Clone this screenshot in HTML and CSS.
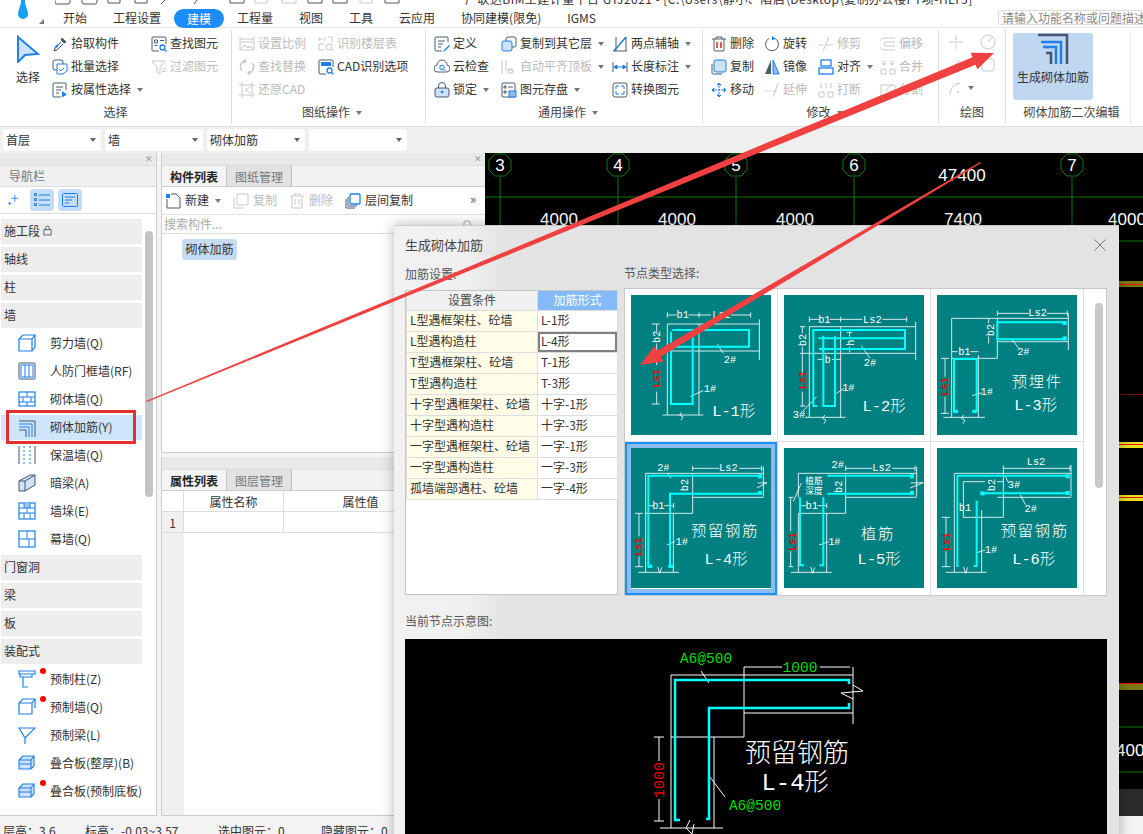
FILE: index.html
```html
<!DOCTYPE html>
<html lang="zh-CN">
<head>
<meta charset="utf-8">
<title>生成砌体加筋</title>
<link rel="stylesheet" href="styles.css">
</head>
<body>
<svg class="defs" xmlns="http://www.w3.org/2000/svg">
  <symbol id="i-pointer" viewBox="0 0 24 28"><path d="M2 2 L22 19 L9 20 L2 27Z" fill="#cfe2fb" stroke="#1e7fe8" stroke-width="2"/></symbol>
  <symbol id="i-pick" viewBox="0 0 16 16"><path d="M10 2 l4 4 -2 1 -3-3z" fill="#4a5a6e" stroke="#4a5a6e"/><path d="M9 6 L3 12 L2 15 L5 14 L11 8" fill="none" stroke="#4a5a6e"/><path d="M3 12 l3-3" stroke="#1e7fe8" stroke-width="2"/></symbol>
  <symbol id="i-batch" viewBox="0 0 16 16"><rect x="1" y="1" width="10" height="10" rx="2" fill="none" stroke="#4a5a6e"/><path d="M5 5 h10 v7 l-4 3 h-6z" fill="#fff" stroke="#1e7fe8"/><path d="M7 10 l2 2 3-3" fill="none" stroke="#1e7fe8"/></symbol>
  <symbol id="i-attr" viewBox="0 0 16 16"><path d="M9 15 H2 a1 1 0 0 1-1-1 V2 a1 1 0 0 1 1-1 h11 a1 1 0 0 1 1 1 v6" fill="none" stroke="#4a5a6e"/><path d="M4 5 h7 M4 8 h5 M4 11 h3" stroke="#4a5a6e"/><path d="M10 9 l5 3.500 -5 3z" fill="#1e7fe8"/></symbol>
  <symbol id="i-find" viewBox="0 0 16 16"><path d="M8 15 H2 a1 1 0 0 1-1-1 V2 a1 1 0 0 1 1-1 h12 a1 1 0 0 1 1 1 v6" fill="none" stroke="#4a5a6e"/><path d="M3.500 4 h3 v3 h-3z M9 4.500 h4 M3.500 9.500 h3" fill="none" stroke="#4a5a6e"/><circle cx="11.500" cy="11.500" r="2.500" fill="none" stroke="#1e7fe8" stroke-width="1.300"/><path d="M13.500 13.500 L15.500 15.500" stroke="#1e7fe8" stroke-width="1.300"/></symbol>
  <symbol id="i-filter" viewBox="0 0 16 16"><path d="M1 2 H14 L9 8 V15 L6 13 V8Z M11 10 h4 M11 12.500 h4" fill="none" stroke="#c8c8c8"/></symbol>
  <symbol id="i-scale" viewBox="0 0 16 16"><path d="M1 1 v4 M15 1 v4 M1 3 h14 M1 6 h14 v8 H1z M2 13 l4-4 3 3 2-2 3 3" fill="none" stroke="#c8c8c8"/></symbol>
  <symbol id="i-floor" viewBox="0 0 16 16"><path d="M1 1 v4 M1 3 h4 M1 8 h5 M1 8 v6 h5 M7 1 v4 M10 1 h4 v5" fill="none" stroke="#c8c8c8"/><circle cx="11" cy="11" r="3" fill="none" stroke="#c8c8c8"/><path d="M13 13 l2 2" stroke="#c8c8c8"/></symbol>
  <symbol id="i-replace" viewBox="0 0 16 16"><path d="M3 12 A6 6 0 0 1 6 2 M13 4 A6 6 0 0 1 10 14 M5 0 l2 2 -2 2 M11 12 l-2 2 2 2" fill="none" stroke="#c8c8c8" stroke-width="1.300"/></symbol>
  <symbol id="i-cadopt" viewBox="0 0 16 16"><path d="M8 15 H2 a1 1 0 0 1-1-1 V2 a1 1 0 0 1 1-1 h12 a1 1 0 0 1 1 1 v6" fill="none" stroke="#4a5a6e"/><rect x="3" y="3" width="10" height="4" fill="#1e7fe8"/><circle cx="11.500" cy="11.500" r="2.500" fill="none" stroke="#1e7fe8" stroke-width="1.300"/><path d="M13.500 13.500 L15.500 15.500" stroke="#1e7fe8" stroke-width="1.300"/></symbol>
  <symbol id="i-restore" viewBox="0 0 16 16"><path d="M3 0 v16 M13 0 v16 M0 3 h16 M0 13 h16 M11 5 l-5 3 5 3" fill="none" stroke="#c8c8c8"/></symbol>
  <symbol id="i-define" viewBox="0 0 16 16"><path d="M14 6 V2 a1 1 0 0 0-1-1 H2 a1 1 0 0 0-1 1 v12 a1 1 0 0 0 1 1 h6 M4 5 h7 M4 8 h5 M4 11 h3" fill="none" stroke="#4a5a6e"/><path d="M10 14 l5-5 1 1-5 5-2 1z" fill="#1e7fe8"/></symbol>
  <symbol id="i-cloud" viewBox="0 0 16 16"><path d="M4 13 A3.500 3.500 0 0 1 3 6 A5 5 0 0 1 13 6 A3.500 3.500 0 0 1 12 13z" fill="none" stroke="#4a5a6e"/><circle cx="8" cy="8.500" r="2.300" fill="#dbe9fb" stroke="#1e7fe8"/><path d="M10 10.500 l1.500 1.500" stroke="#1e7fe8"/></symbol>
  <symbol id="i-lock" viewBox="0 0 16 16"><rect x="1" y="6" width="14" height="9" rx="2" fill="#cfe2fb" stroke="#4a5a6e"/><path d="M4.500 6 V4 a3.500 3.500 0 0 1 7 0 V6" fill="none" stroke="#4a5a6e"/><circle cx="8" cy="10" r="1.300" fill="#1e7fe8"/></symbol>
  <symbol id="i-copyfloor" viewBox="0 0 16 16"><rect x="5" y="1" width="10" height="10" rx="2" fill="#fff" stroke="#4a5a6e"/><rect x="1" y="5" width="10" height="10" rx="2" fill="#cfe2fb" stroke="#1e7fe8"/></symbol>
  <symbol id="i-align" viewBox="0 0 16 16"><path d="M1 1 v14 M5 1 v10 h8" fill="none" stroke="#c8c8c8"/><path d="M8 10 h3 l1 4 h-5z" fill="none" stroke="#c8c8c8"/></symbol>
  <symbol id="i-save" viewBox="0 0 16 16"><rect x="1" y="1" width="13" height="14" rx="1" fill="none" stroke="#4a5a6e"/><path d="M3 4 h2 v2 h-2z M7 5 h5 M3 9 h2 v2 h-2z" fill="none" stroke="#4a5a6e"/><rect x="8" y="9" width="7" height="6" fill="#8fbef5" stroke="#1e7fe8"/></symbol>
  <symbol id="i-axis" viewBox="0 0 16 16"><path d="M2 15 L14 1 M4 1 v14 M1 15 h14 M14 1 v14" fill="none" stroke="#4a5a6e"/><path d="M2 15 L14 1" stroke="#1e7fe8" stroke-width="1.500"/></symbol>
  <symbol id="i-len" viewBox="0 0 16 16"><path d="M1 3 v10 M15 3 v10" stroke="#4a5a6e"/><path d="M2 8 h12 M2 8 l3-2 v4z M14 8 l-3-2 v4z" fill="#1e7fe8" stroke="#1e7fe8"/></symbol>
  <symbol id="i-convert" viewBox="0 0 16 16"><rect x="1" y="1" width="14" height="14" rx="2" fill="none" stroke="#4a5a6e"/><path d="M4 7 V4 h3 M9 4 h3 v3 M12 9 v3 H9 M7 12 H4 V9" fill="none" stroke="#1e7fe8"/></symbol>
  <symbol id="i-del" viewBox="0 0 16 16"><path d="M1 3 h14 M5 3 V1 h6 v2 M3 3 v11 a1 1 0 0 0 1 1 h8 a1 1 0 0 0 1-1 V3" fill="none" stroke="#4a5a6e"/><path d="M6 6 v6 M10 6 v6" stroke="#e02020" stroke-width="1.500"/></symbol>
  <symbol id="i-rotate" viewBox="0 0 16 16"><path d="M11 2.500 A6.500 6.500 0 1 1 5 2.500" fill="none" stroke="#4a5a6e"/><path d="M8 0 l3.500 2.500 -3.500 2z" fill="#1e7fe8"/></symbol>
  <symbol id="i-trim" viewBox="0 0 16 16"><path d="M1 9 h4 M7 9 h8 M11 1 L5 15" fill="none" stroke="#c8c8c8"/></symbol>
  <symbol id="i-offset" viewBox="0 0 16 16"><path d="M15 2 H5 a4 4 0 0 0 0 12 h10 M15 6 H6 a2 2 0 0 0 0 4 h9" fill="none" stroke="#c8c8c8"/></symbol>
  <symbol id="i-copy" viewBox="0 0 16 16"><path d="M1 5 v9 a1 1 0 0 0 1 1 h9" fill="none" stroke="#4a5a6e"/><rect x="3" y="1" width="12" height="12" rx="2" fill="#cfe2fb" stroke="#1e7fe8"/></symbol>
  <symbol id="i-mirror" viewBox="0 0 16 16"><path d="M7 1 L1 15 H7z" fill="#4a5a6e"/><path d="M9 1 L15 15 H9z" fill="#8fbef5" stroke="#1e7fe8"/></symbol>
  <symbol id="i-alignto" viewBox="0 0 16 16"><rect x="3" y="1" width="10" height="6" fill="none" stroke="#1e7fe8" stroke-width="1.300"/><rect x="1" y="9" width="14" height="6" fill="none" stroke="#1e7fe8" stroke-width="1.300"/></symbol>
  <symbol id="i-merge" viewBox="0 0 16 16"><path d="M1 10 h5 v5 H1z M10 10 h5 v5 h-5z M4 1 v5 M12 1 v5 M2 4 l2 2 2-2 M10 4 l2 2 2-2" fill="none" stroke="#c8c8c8"/></symbol>
  <symbol id="i-move" viewBox="0 0 16 16"><path d="M8 1 v14 M1 8 h14 M8 1 l-2 2 h4z M8 15 l-2-2 h4z M1 8 l2-2 v4z M15 8 l-2-2 v4z" fill="#1e7fe8" stroke="#1e7fe8" stroke-dasharray="2 1"/></symbol>
  <symbol id="i-extend" viewBox="0 0 16 16"><path d="M1 9 h2 M5 9 h2 M9 9 h4 M14 1 L9 15" fill="none" stroke="#c8c8c8"/></symbol>
  <symbol id="i-break" viewBox="0 0 16 16"><path d="M1 10 h5 v5 H1z M10 10 h5 v5 h-5z M3 1 v5 M8 1 v5 M13 1 v5" fill="none" stroke="#c8c8c8"/></symbol>
  <symbol id="i-cut" viewBox="0 0 16 16"><path d="M14 3 H1 v12 h14 V3 M5 9 l8-7" fill="none" stroke="#c8c8c8"/></symbol>
  <symbol id="i-cross" viewBox="0 0 16 16"><path d="M8 1 v5 M8 10 v5 M1 8 h5 M10 8 h5" stroke="#c8c8c8"/><circle cx="8" cy="8" r="1" fill="#c8c8c8"/></symbol>
  <symbol id="i-gauge" viewBox="0 0 16 16"><circle cx="8" cy="8" r="7" fill="none" stroke="#c8c8c8"/><path d="M8 8 l4-4" stroke="#c8c8c8"/></symbol>
  <symbol id="i-pen" viewBox="0 0 16 16"><path d="M2 14 L12 3" stroke="#c8c8c8"/><circle cx="3" cy="13" r="1" fill="#c8c8c8"/></symbol>
  <symbol id="i-square" viewBox="0 0 16 16"><rect x="2" y="2" width="12" height="12" rx="2" fill="none" stroke="#c8c8c8"/></symbol>
  <symbol id="i-arc" viewBox="0 0 16 16"><path d="M2 15 A11 11 0 0 1 12 3" fill="none" stroke="#c8c8c8"/><circle cx="10" cy="12" r="1" fill="#c8c8c8"/></symbol>
  <symbol id="i-rebar" viewBox="0 0 32 32"><path d="M1 2 H30 V31" fill="none" stroke="#45566e" stroke-width="2.500"/><path d="M4 9 H24 V31" fill="none" stroke="#1e7fe8" stroke-width="2.500"/><path d="M6 14 H19 V31" fill="none" stroke="#1e7fe8" stroke-width="2.500"/><path d="M9 20 H14 V31" fill="none" stroke="#45566e" stroke-width="2.500"/></symbol>

  <symbol id="n-spark" viewBox="0 0 14 14"><path d="M8 1 v8 M4 5 h8 M2 9 v4 M0 11 h4" stroke="#1e7fe8"/></symbol>
  <symbol id="n-list" viewBox="0 0 16 14"><path d="M5 2 h11 M5 7 h11 M5 12 h11" stroke="#1e7fe8"/><path d="M0.500 0.500 h2 v2 h-2z M0.500 5.500 h2 v2 h-2z M0.500 10.500 h2 v2 h-2z" fill="none" stroke="#1e7fe8"/></symbol>
  <symbol id="n-card" viewBox="0 0 16 14"><rect x="0.500" y="0.500" width="15" height="13" rx="1" fill="none" stroke="#1e7fe8"/><path d="M3 4 h10 M3 7 h7 M3 10 h4" stroke="#1e7fe8"/></symbol>
  <symbol id="n-shear" viewBox="0 0 18 18"><path d="M1 5 h13 v12 H1z" fill="none" stroke="#1e7fe8" stroke-width="1.200"/><path d="M1 5 L5 1 H17 V13 L14 17 M14 5 L17 1" fill="none" stroke="#1e7fe8" stroke-width="1.200"/></symbol>
  <symbol id="n-door" viewBox="0 0 18 18"><rect x="1" y="1" width="16" height="16" rx="1" fill="none" stroke="#45566e"/><rect x="3" y="3" width="12" height="12" fill="none" stroke="#1e7fe8"/><path d="M7 3 v12 M11 3 v12" stroke="#1e7fe8"/></symbol>
  <symbol id="n-brick" viewBox="0 0 18 18"><rect x="1" y="2" width="16" height="14" fill="none" stroke="#1e7fe8" stroke-width="1.200"/><path d="M1 7 h16 M1 12 h16 M9 2 v5 M5 7 v5 M13 7 v5 M9 12 v4" stroke="#1e7fe8"/></symbol>
  <symbol id="n-rebar" viewBox="0 0 18 18"><path d="M1 2 H17 V18" fill="none" stroke="#45566e"/><path d="M1 5 H14 V18 M1 8 H11 V18" fill="none" stroke="#1e7fe8"/><path d="M1 11 H8 V18" fill="none" stroke="#45566e"/></symbol>
  <symbol id="n-insul" viewBox="0 0 18 18"><path d="M1 0 v18 M17 0 v18" stroke="#45566e"/><path d="M6 0 v18 M12 0 v18" stroke="#1e7fe8" stroke-dasharray="2 2"/></symbol>
  <symbol id="n-beam" viewBox="0 0 18 18"><path d="M1 7 L12 1 H17 V11 L7 17 H1z M1 7 H7 V17 M7 7 L17 1" fill="#cfe2fb" stroke="#45566e"/></symbol>
  <symbol id="n-pier" viewBox="0 0 18 18"><rect x="1" y="1" width="16" height="16" fill="none" stroke="#1e7fe8" stroke-width="1.200"/><path d="M6 1 h6 v5 H6z" fill="#9cc6f7"/><path d="M1 6 h16 M1 11 h16 M6 1 v5 M12 1 v5 M9 6 v5 M6 11 v6 M12 11 v6" stroke="#1e7fe8"/></symbol>
  <symbol id="n-curtain" viewBox="0 0 18 18"><rect x="1" y="1" width="16" height="16" fill="none" stroke="#1e7fe8" stroke-width="1.200"/><path d="M1 9 h16 M9 1 v8 M11 9 v8" stroke="#1e7fe8"/></symbol>
  <symbol id="n-pcol" viewBox="0 0 18 18"><path d="M1 1 h16 v3 H1z M2 4 v3 h12 V4 M5 7 v10 h5" fill="none" stroke="#1e7fe8" stroke-width="1.200"/></symbol>
  <symbol id="n-pwall" viewBox="0 0 18 18"><path d="M1 5 h13 v11 H1z M1 5 L5 1 H17 V10 M14 5 L17 1" fill="none" stroke="#1e7fe8" stroke-width="1.200"/></symbol>
  <symbol id="n-pbeam" viewBox="0 0 18 18"><path d="M1 2 H17 L7 12 Z M7 12 V18" fill="none" stroke="#1e7fe8" stroke-width="1.200"/></symbol>
  <symbol id="n-slab" viewBox="0 0 18 18"><path d="M1 6 L5 2 H16 V12 L13 15 H1z M1 6 H13 V15 M13 6 L16 2 M1 10 H13" fill="#cfe2fb" stroke="#1e7fe8" stroke-width="1.100"/></symbol>
  <symbol id="t-new" viewBox="0 0 16 16"><path d="M2 6 V15 H15 V5 L11 1 H6" fill="none" stroke="#45566e"/><rect x="1" y="1" width="4" height="4" fill="#1e7fe8"/></symbol>
  <symbol id="t-copy" viewBox="0 0 16 16"><path d="M1 5 v10 h10" fill="none" stroke="#c8c8c8"/><rect x="4" y="1" width="11" height="11" rx="1" fill="none" stroke="#c8c8c8"/></symbol>
  <symbol id="t-del" viewBox="0 0 16 16"><path d="M1 3 h14 M5 3 V1 h6 v2 M3 3 v12 h10 V3 M6 6 v6 M10 6 v6" fill="none" stroke="#c8c8c8"/></symbol>
  <symbol id="t-floor" viewBox="0 0 16 16"><path d="M1 6 v9 h9 M3 4 v9 h9" fill="none" stroke="#45566e"/><rect x="5" y="1" width="10" height="10" rx="1" fill="#fff" stroke="#1e7fe8" stroke-width="1.300"/></symbol>
  <symbol id="t-search" viewBox="0 0 14 14"><circle cx="6" cy="6" r="4" fill="none" stroke="#999"/><path d="M9 9 l4 4" stroke="#999"/></symbol>
</svg>

<div class="app">
  <header class="top">
    <svg class="qa" viewBox="0 0 346 8" width="346" height="8"><path d="M0 0 v2 a2 2 0 0 0 2 2 h11 a2 2 0 0 0 2-2 V0 M27 0 v2 a2 2 0 0 0 2 2 h11 a2 2 0 0 0 2-2 V0 M53 0 v3 h12 V0 M80 0 v3 h12 V0 M110 0 l-4 4 M142 0 l-3 4 M175 0 v3 h14 V0" fill="none" stroke="#555"/><path d="M200 0 v3 h12 V0 M227 0 v3 h14 V0 M305 0 v3 h12 V0" fill="none" stroke="#c8c8c8"/><path d="M253 0 v3 h14 V0 M278 0 v3 h14 V0 M330 0 v3 h14 V0" fill="none" stroke="#555"/></svg>
    <span class="title">广联达BIM土建计量平台 GTJ2021 - [C:\Users\静小、陷启\Desktop\复制办公楼PT项-HLT5]</span>
  </header>
  <svg class="logo" viewBox="0 0 10 20" width="10" height="20"><path d="M3 0 H7 C7 6 10 10 10 14 A5 5 0 0 1 0 14 C0 10 3 6 3 0Z" fill="#17a0f2"/></svg>
  <nav class="tabs">
    <span class="tab-mark"></span>
    <span>开始</span><span>工程设置</span><span class="tab-on">建模</span><span>工程量</span><span>视图</span><span>工具</span><span>云应用</span><span>协同建模(限免)</span><span>IGMS</span>
    <span class="help">请输入功能名称或问题描述</span>
  </nav>

  <section class="ribbon">
    <div class="group g-select">
      <div class="g-body">
        <div class="bigbtn"><svg class="ic-pointer"><use href="#i-pointer"/></svg><span>选择</span></div>
        <div class="col c1a">
          <div class="rit"><svg class="ic"><use href="#i-pick"/></svg>拾取构件</div>
          <div class="rit"><svg class="ic"><use href="#i-batch"/></svg>批量选择</div>
          <div class="rit"><svg class="ic"><use href="#i-attr"/></svg>按属性选择<i class="car"></i></div>
        </div>
        <div class="col">
          <div class="rit"><svg class="ic"><use href="#i-find"/></svg>查找图元</div>
          <div class="rit off"><svg class="ic"><use href="#i-filter"/></svg>过滤图元</div>
        </div>
      </div>
      <div class="g-label">选择</div>
    </div>
    <div class="group g-draw">
      <div class="g-body">
        <div class="col c2a">
          <div class="rit off"><svg class="ic"><use href="#i-scale"/></svg>设置比例</div>
          <div class="rit off"><svg class="ic"><use href="#i-replace"/></svg>查找替换</div>
          <div class="rit off"><svg class="ic"><use href="#i-restore"/></svg>还原CAD</div>
        </div>
        <div class="col">
          <div class="rit off"><svg class="ic"><use href="#i-floor"/></svg>识别楼层表</div>
          <div class="rit"><svg class="ic"><use href="#i-cadopt"/></svg>CAD识别选项</div>
        </div>
      </div>
      <div class="g-label">图纸操作<i class="car"></i></div>
    </div>
    <div class="group g-common">
      <div class="g-body">
        <div class="col c3a">
          <div class="rit"><svg class="ic"><use href="#i-define"/></svg>定义</div>
          <div class="rit"><svg class="ic"><use href="#i-cloud"/></svg>云检查</div>
          <div class="rit"><svg class="ic"><use href="#i-lock"/></svg>锁定<i class="car"></i></div>
        </div>
        <div class="col c3b">
          <div class="rit"><svg class="ic"><use href="#i-copyfloor"/></svg>复制到其它层<i class="car"></i></div>
          <div class="rit off"><svg class="ic"><use href="#i-align"/></svg>自动平齐顶板<i class="car"></i></div>
          <div class="rit"><svg class="ic"><use href="#i-save"/></svg>图元存盘<i class="car"></i></div>
        </div>
        <div class="col">
          <div class="rit"><svg class="ic"><use href="#i-axis"/></svg>两点辅轴<i class="car"></i></div>
          <div class="rit"><svg class="ic"><use href="#i-len"/></svg>长度标注<i class="car"></i></div>
          <div class="rit"><svg class="ic"><use href="#i-convert"/></svg>转换图元</div>
        </div>
      </div>
      <div class="g-label">通用操作<i class="car"></i></div>
    </div>
    <div class="group g-modify">
      <div class="g-body">
        <div class="col c4a">
          <div class="rit"><svg class="ic"><use href="#i-del"/></svg>删除</div>
          <div class="rit"><svg class="ic"><use href="#i-copy"/></svg>复制</div>
          <div class="rit"><svg class="ic"><use href="#i-move"/></svg>移动</div>
        </div>
        <div class="col c4b">
          <div class="rit"><svg class="ic"><use href="#i-rotate"/></svg>旋转</div>
          <div class="rit"><svg class="ic"><use href="#i-mirror"/></svg>镜像</div>
          <div class="rit off"><svg class="ic"><use href="#i-extend"/></svg>延伸</div>
        </div>
        <div class="col c4c">
          <div class="rit off"><svg class="ic"><use href="#i-trim"/></svg>修剪</div>
          <div class="rit"><svg class="ic"><use href="#i-alignto"/></svg>对齐<i class="car"></i></div>
          <div class="rit off"><svg class="ic"><use href="#i-break"/></svg>打断</div>
        </div>
        <div class="col">
          <div class="rit off"><svg class="ic"><use href="#i-offset"/></svg>偏移</div>
          <div class="rit off"><svg class="ic"><use href="#i-merge"/></svg>合并</div>
          <div class="rit off"><svg class="ic"><use href="#i-cut"/></svg>分割</div>
        </div>
      </div>
      <div class="g-label">修改<i class="car"></i></div>
    </div>
    <div class="group g-sketch">
      <div class="g-body sk">
        <svg class="ic"><use href="#i-cross"/></svg><svg class="ic"><use href="#i-gauge"/></svg>
        <svg class="ic"><use href="#i-pen"/></svg><svg class="ic"><use href="#i-square"/></svg>
        <svg class="ic"><use href="#i-arc"/></svg><i class="car"></i>
      </div>
      <div class="g-label">绘图</div>
    </div>
    <div class="group g-edit">
      <div class="g-body">
        <div class="genbtn"><svg class="ic-rebar"><use href="#i-rebar"/></svg><span>生成砌体加筋</span></div>
      </div>
      <div class="g-label">砌体加筋二次编辑</div>
    </div>
  </section>

  <div class="selbar">
    <div class="sel">首层</div>
    <div class="sel">墙</div>
    <div class="sel">砌体加筋</div>
    <div class="sel"></div>
  </div>

  <main class="main">
    <aside class="nav">
      <div class="grip"><span class="x">✕</span></div>
      <div class="nav-h">导航栏</div>
      <div class="nav-tools">
        <svg class="nt-spark"><use href="#n-spark"/></svg>
        <span class="nt-on"><svg class="nt"><use href="#n-list"/></svg></span>
        <span class="nt-on"><svg class="nt"><use href="#n-card"/></svg></span>
      </div>
      <div class="nav-list">
        <div class="sec">施工段 <svg class="lock" viewBox="0 0 10 12"><path d="M1 5 h8 v6 H1z M3 5 V3 a2 2 0 0 1 4 0 V5" fill="none" stroke="#555"/></svg></div>
        <div class="sec">轴线</div>
        <div class="sec">柱</div>
        <div class="sec">墙</div>
        <div class="items">
          <div class="item"><svg class="ni"><use href="#n-shear"/></svg>剪力墙(Q)</div>
          <div class="item"><svg class="ni"><use href="#n-door"/></svg>人防门框墙(RF)</div>
          <div class="item"><svg class="ni"><use href="#n-brick"/></svg>砌体墙(Q)</div>
          <div class="item item-sel"><svg class="ni"><use href="#n-rebar"/></svg>砌体加筋(Y)<span class="redbox"></span></div>
          <div class="item"><svg class="ni"><use href="#n-insul"/></svg>保温墙(Q)</div>
          <div class="item"><svg class="ni"><use href="#n-beam"/></svg>暗梁(A)</div>
          <div class="item"><svg class="ni"><use href="#n-pier"/></svg>墙垛(E)</div>
          <div class="item"><svg class="ni"><use href="#n-curtain"/></svg>幕墙(Q)</div>
        </div>
        <div class="sec">门窗洞</div>
        <div class="sec">梁</div>
        <div class="sec">板</div>
        <div class="sec">装配式</div>
        <div class="items">
          <div class="item"><svg class="ni"><use href="#n-pcol"/></svg>预制柱(Z)<span class="dot"></span></div>
          <div class="item"><svg class="ni"><use href="#n-pwall"/></svg>预制墙(Q)<span class="dot"></span></div>
          <div class="item"><svg class="ni"><use href="#n-pbeam"/></svg>预制梁(L)</div>
          <div class="item"><svg class="ni"><use href="#n-slab"/></svg>叠合板(整厚)(B)</div>
          <div class="item"><svg class="ni"><use href="#n-slab"/></svg>叠合板(预制底板)<span class="dot"></span></div>
        </div>
      </div>
      <div class="nav-scroll"></div>
    </aside>

    <div class="mid">
      <section class="panel p-top">
        <div class="grip"><span class="x">✕</span></div>
        <div class="ptabs"><span class="ptab on">构件列表</span><span class="ptab">图纸管理</span></div>
        <div class="ptools">
          <span class="pt"><svg class="ic"><use href="#t-new"/></svg>新建<i class="car"></i></span>
          <span class="pt off"><svg class="ic"><use href="#t-copy"/></svg>复制</span>
          <span class="pt off"><svg class="ic"><use href="#t-del"/></svg>删除</span>
          <span class="pt"><svg class="ic"><use href="#t-floor"/></svg>层间复制</span>
          <span class="more">»</span>
        </div>
        <div class="psearch"><span>搜索构件...</span><svg class="ps-i"><use href="#t-search"/></svg></div>
        <div class="pbody"><span class="chip">砌体加筋</span></div>
      </section>
      <section class="panel p-bot">
        <div class="grip"></div>
        <div class="ptabs"><span class="ptab on">属性列表</span><span class="ptab">图层管理</span></div>
        <div class="attr-head"><span class="ah0"></span><span class="ah1">属性名称</span><span class="ah2">属性值</span></div>
        <div class="attr-row"><span class="ah0">1</span><span class="ah1"></span><span class="ah2"></span></div>
        <div class="attr-rest"></div>
      </section>
    </div>

    <div class="cad">
      <svg class="cad-svg" viewBox="485 153 658 663">
        <g class="g-line">
          <path d="M485 197 H1143 M500 177 V225 M618 177 V225 M736 177 V225 M854 177 V225 M1072 177 V225 M1119 241 H1143 M1119 727 H1143 M1119 772 H1143"/>
          <polygon points="511,170 505,176 495,176 489,170 489,160 495,154 505,154 511,160"/>
          <polygon points="629,170 623,176 613,176 607,170 607,160 613,154 623,154 629,160"/>
          <polygon points="747,170 741,176 731,176 725,170 725,160 731,154 741,154 747,160"/>
          <polygon points="865,170 859,176 849,176 843,170 843,160 849,154 859,154 865,160"/>
          <polygon points="1083,170 1077,176 1067,176 1061,170 1061,160 1067,154 1077,154 1083,160"/>
        </g>
        <g class="cad-t">
          <text x="500" y="171" class="ax">3</text><text x="618" y="171" class="ax">4</text><text x="736" y="171" class="ax">5</text><text x="854" y="171" class="ax">6</text><text x="1072" y="171" class="ax">7</text>
          <text x="962" y="181">47400</text>
          <text x="559" y="225">4000</text><text x="677" y="225">4000</text><text x="795" y="225">4000</text><text x="963" y="225">7400</text><text x="1127" y="225">4000</text>
          <text x="1135" y="756">4000</text>
        </g>
        <rect class="s-olive" x="1119" y="281" width="24" height="6"/><rect class="s-red" x="1119" y="284" width="24" height="1"/>
        <rect class="s-dred" x="1119" y="394" width="24" height="1"/>
        <rect class="s-yel" x="1119" y="442" width="24" height="6"/><rect class="s-red" x="1119" y="444" width="24" height="1"/>
        <rect class="s-yel" x="1119" y="495" width="24" height="6"/><rect class="s-red" x="1119" y="497" width="24" height="1"/>
        <rect class="s-olive" x="1119" y="683" width="24" height="7"/><rect class="s-red" x="1119" y="683" width="24" height="1"/>
        <rect class="s-grey" x="1119" y="789" width="24" height="27"/>
      </svg>
    </div>
  </main>

  <footer class="status">
    <span class="s1">层高：3.6</span><span class="s2">标高：-0.03~3.57</span><span class="s3">选中图元：0</span><span class="s4">隐藏图元：0</span>
  </footer>

  <div class="dialog">
    <div class="d-title"><span>生成砌体加筋</span><svg class="d-x" viewBox="0 0 12 12"><path d="M0.500 0.500 L11.500 11.500 M11.500 0.500 L0.500 11.500"/></svg></div>
    <div class="d-row">
      <div class="d-left">
        <div class="d-lab lab-l">加筋设置:</div>
        <div class="tbl-wrap">
          <table class="tbl">
            <tr><th>设置条件</th><th class="th2">加筋形式</th></tr>
            <tr><td>L型遇框架柱、砼墙</td><td>L-1形</td></tr>
            <tr><td>L型遇构造柱</td><td class="cur">L-4形</td></tr>
            <tr><td>T型遇框架柱、砼墙</td><td>T-1形</td></tr>
            <tr><td>T型遇构造柱</td><td>T-3形</td></tr>
            <tr><td>十字型遇框架柱、砼墙</td><td>十字-1形</td></tr>
            <tr><td>十字型遇构造柱</td><td>十字-3形</td></tr>
            <tr><td>一字型遇框架柱、砼墙</td><td>一字-1形</td></tr>
            <tr><td>一字型遇构造柱</td><td>一字-3形</td></tr>
            <tr><td>孤墙端部遇柱、砼墙</td><td>一字-4形</td></tr>
          </table>
        </div>
      </div>
      <div class="d-right">
        <div class="d-lab lab-r">节点类型选择:</div>
        <div class="nodes">
          <div class="node-grid">
            <div class="cell"><svg class="tile" viewBox="0 0 420 420">
              <path class="w" d="M109 52 V68 M109 60 H137 M172 60 H240 M300 60 H359 M359 52 V68 M204 52 V68 M109 87 H385 M109 87 V360 M204 87 V360 M60 168 H385 M95 360 H217 M385 73 V195 M62 87 H87 M62 327 H87 M77 87 V110 M77 145 V210 M77 290 V327 M259 148 L277 175 M177 305 L217 287 M152 352 L146 360 L156 366 L150 376"/>
              <path class="c" d="M124 105 H354 V155 H124 M120 110 V327 H185 V110"/>
              <text class="t" x="155" y="70">b1</text><text class="t" x="272" y="70">Ls2</text><text class="t" x="297" y="205">2#</text><text class="t" x="237" y="290">1#</text>
              <text class="t" transform="rotate(-90 77 125)" x="77" y="135">b2</text><text class="tr" transform="rotate(-90 77 250)" x="77" y="260">Ls1</text>
              <text class="big" x="308" y="362">L-1形</text>
            </svg></div>
            <div class="cell"><svg class="tile" viewBox="0 0 420 420">
              <path class="w" d="M76 65 V81 M76 73 H105 M137 73 H170 M170 65 V81 M170 73 H235 M295 73 H368 M368 65 V81 M76 95 H395 M395 80 V195 M48 175 H395 M76 95 V367 M170 95 V367 M63 367 H185 M48 95 H65 M55 95 V115 M55 155 V240 M55 290 V333 M48 333 H65 M100 193 H118 M144 193 H170 M188 112 H205 M197 112 V125 M197 155 V172 M232 152 L258 190 M155 297 L180 280 M98 305 L55 350 M122 360 L116 370 L126 376 L120 386"/>
              <path class="c" d="M100 333 H88 V105 H363 V130 H103 M363 130 V162 H105 M118 122 V333 H153 V122"/>
              <text class="t" x="121" y="83">b1</text><text class="t" x="265" y="83">Ls2</text><text class="t" x="131" y="203">b</text><text class="t" x="258" y="213">2#</text><text class="t" x="193" y="287">1#</text><text class="t" x="45" y="370">3#</text>
              <text class="t" transform="rotate(-90 55 135)" x="55" y="145">b2</text><text class="t" transform="rotate(-90 201 143)" x="201" y="153">h</text><text class="tr" transform="rotate(-90 55 255)" x="55" y="265">Ls1</text>
              <text class="big" x="300" y="348">L-2形</text>
            </svg></div>
            <div class="cell"><svg class="tile" viewBox="0 0 420 420">
              <path class="w" d="M181 47 V63 M181 55 H275 M330 55 H391 M391 47 V63 M44 70 H394 M181 70 V190 M44 190 H181 M44 70 V367 M124 180 V367 M19 367 H144 M394 55 V165 M181 140 H394 M44 170 H62 M100 170 H124 M12 190 H36 M24 190 V245 M24 305 V355 M12 355 H36 M155 70 V85 M155 125 V146 M225 133 L245 160 M105 302 L135 293 M80 360 L74 370 L84 376 L78 386"/>
              <path class="c" d="M389 82 H181 V133 H389 M51 350 V192 H119 V350"/>
              <rect class="cf" x="49" y="344" width="14" height="10"/><rect class="cf" x="106" y="344" width="14" height="10"/><rect class="cf" x="377" y="78" width="12" height="12"/><rect class="cf" x="377" y="124" width="12" height="12"/>
              <text class="t" x="302" y="63">Ls2</text><text class="t" x="82" y="180">b1</text><text class="t" x="259" y="180">2#</text><text class="t" x="149" y="300">1#</text>
              <text class="t" transform="rotate(-90 162 105)" x="162" y="115">b2</text><text class="tr" transform="rotate(-90 24 275)" x="24" y="285">Ls1</text>
              <text class="bigz" x="301" y="276">预埋件</text><text class="big" x="296" y="345">L-3形</text>
            </svg></div>
            <div class="cell cell-on"><svg class="tile" viewBox="0 0 420 420">
              <path class="w" d="M44 76 H397 M185 76 V196 M44 196 H185 M185 148 H397 M397 56 V146 M185 53 V69 M185 61 H265 M325 61 H392 M392 53 V69 M22 373 H144 M44 76 V373 M127 196 V373 M12 196 H36 M24 196 V265 M24 325 V356 M12 356 H36 M54 173 H68 M100 173 H128 M128 165 V181 M110 76 L120 91 M107 291 L132 281 M380 105 L408 104 L378 120 M80 356 L86 376 L92 358"/>
              <path class="c" d="M60 354 H52 V83 H390 M124 354 H117 V137 H390"/>
              <rect class="cf" x="381" y="79" width="12" height="12"/><rect class="cf" x="381" y="129" width="12" height="12"/><rect class="cf" x="50" y="350" width="14" height="10"/><rect class="cf" x="112" y="350" width="14" height="10"/>
              <text class="t" x="97" y="68">2#</text><text class="t" x="292" y="68">Ls2</text><text class="t" x="82" y="183">b1</text><text class="t" x="152" y="291">1#</text>
              <text class="t" transform="rotate(-90 162 111)" x="162" y="121">b2</text><text class="tr" transform="rotate(-90 24 296)" x="24" y="306">Ls1</text>
              <text class="bigz" x="282" y="265">预留钢筋</text><text class="big" x="285" y="348">L-4形</text>
            </svg></div>
            <div class="cell"><svg class="tile" viewBox="0 0 420 420">
              <path class="w" d="M43 76 H398 M185 76 V196 M43 196 H185 M185 148 H398 M398 56 V146 M185 53 V69 M185 61 H265 M325 61 H393 M393 53 V69 M21 373 H143 M43 76 V148 M43 196 V373 M128 196 V373 M14 148 H28 M20 148 V250 M20 310 V356 M14 356 H28 M50 173 H66 M100 173 H128 M128 165 V181 M52 105 L28 160 M105 291 L135 281 M380 105 L418 104 L378 120 M80 356 L86 376 L92 358"/>
              <path class="c" d="M130 83 H388 M130 137 H388 M48 148 V352 H60 M118 148 V352 H106"/>
              <rect class="cf" x="378" y="79" width="12" height="12"/><rect class="cf" x="378" y="129" width="12" height="12"/>
              <text class="t" x="161" y="61">2#</text><text class="t" x="293" y="68">Ls2</text><text class="ts" x="90" y="108">植筋</text><text class="ts" x="90" y="138">深度</text><text class="t" x="83" y="183">b1</text><text class="t" x="151" y="291">1#</text>
              <text class="t" transform="rotate(-90 163 116)" x="163" y="126">b2</text><text class="tr" transform="rotate(-90 25 281)" x="25" y="291">Ls1</text>
              <text class="bigz" x="282" y="274">植筋</text><text class="big" x="285" y="348">L-5形</text>
            </svg></div>
            <div class="cell"><svg class="tile" viewBox="0 0 420 420">
              <path class="w" d="M52 76 H402 M199 53 V208 M79 208 H199 M181 148 H402 M402 51 V146 M199 61 H399 M399 53 V69 M26 373 H149 M52 76 V373 M134 186 V373 M79 101 V208 M79 101 H144 M180 101 H199 M14 208 H40 M27 208 V260 M27 310 V356 M14 356 H40 M205 85 L215 105 M250 140 L265 170 M120 314 L145 306 M80 356 L86 376 L92 358"/>
              <path class="c" d="M65 354 H61 V83 H396 M396 136 H134 M119 158 V354 H110"/>
              <rect class="cf" x="386" y="79" width="12" height="12"/><rect class="cf" x="386" y="129" width="12" height="12"/><rect class="cf" x="130" y="130" width="12" height="12"/>
              <text class="t" x="297" y="50">Ls2</text><text class="t" x="231" y="121">3#</text><text class="t" x="281" y="193">2#</text><text class="t" x="84" y="189">b1</text><text class="t" x="162" y="316">1#</text>
              <text class="t" transform="rotate(-90 164 111)" x="164" y="121">b2</text><text class="tr" transform="rotate(-90 29 281)" x="29" y="291">Ls1</text>
              <text class="bigz" x="293" y="265">预留钢筋</text><text class="big" x="290" y="348">L-6形</text>
            </svg></div>
          </div>
          <div class="node-scroll"><span></span></div>
        </div>
      </div>
    </div>
    <div class="d-lab d-cur">当前节点示意图:</div>
    <svg class="preview" viewBox="405 639 702 195">
      <path class="pw" d="M671 675 H853 M853 667 V724 M744 667 V737 M671 737 H744 M744 713 H853 M671 675 V828 M714 737 V828 M660 828 H723 M744 667 H782 M820 667 H850 M654 737 H664 M659 737 V761 M659 799 V821 M654 821 H664 M701 671 L709 683 M710 777 L725 797 M853 685 L863 691 L841 693 L853 699 M690 820 L686 828 L692 834 L694 824"/>
      <path class="pc" d="M849 684 V680 H675 V820 H680 M849 703 V708 H709 V819 H706"/>
      <text class="pg" x="706" y="663">A6@500</text>
      <text class="pg" x="800" y="672">1000</text>
      <text class="pg" x="755" y="810">A6@500</text>
      <text class="pr" transform="rotate(-90 659 780)" x="659" y="785">1000</text>
      <text class="pz1" x="797" y="762">预留钢筋</text>
      <text class="pz2" x="795" y="790">L-4形</text>
    </svg>
  </div>

  <svg class="arrows" viewBox="0 0 1143 834">
    <polygon points="146,401 972.500,57.300 970.600,52.700 994,53 977.400,69.300 975.500,64.700 147,402"/>
    <polygon points="980,162 657.200,350.700 654.400,346 640,365 663.600,361.400 660.800,356.700 981,163"/>
  </svg>
</div>
</body>
</html>
```
FILE: styles.css
```css
* { box-sizing: border-box; }
html, body { margin: 0; padding: 0; }
body { width: 1143px; height: 834px; overflow: hidden; background: #fff; font: 12px/1.2 "Noto Sans CJK SC", "Noto Sans", sans-serif; color: #333; }
.defs { display: none; }
.app { position: relative; width: 1143px; height: 834px; overflow: hidden; display: flex; flex-direction: column; }

.top { height: 8px; display: flex; padding-left: 55px; overflow: hidden; }
.qa { flex: none; }
.title { margin: -8px 0 0 64px; line-height: 14px; white-space: nowrap; color: #333; font-size: 12px; letter-spacing: .45px; }
.logo { position: absolute; left: 18px; top: 0; }

.tabs { height: 20px; display: flex; align-items: center; gap: 26px; padding: 1px 0 0 63px; position: relative; white-space: nowrap; border-bottom: 1px solid #e8e8e8; }
.tab-mark { position: absolute; left: 39px; top: 11px; width: 0; height: 0; border-left: 5px solid transparent; border-bottom: 5px solid #777; }
.tab-on { background: #1b8cfb; color: #fff; border-radius: 10px; padding: 0 13px; margin: 0 -13px; line-height: 19px; }
.help { position: absolute; left: 998px; top: 2px; width: 150px; height: 15px; border: 1px solid #ddd; border-radius: 2px; line-height: 13px; padding-left: 3px; color: #888; overflow: hidden; }

.ribbon { height: 98px; display: flex; flex: none; }
.group { display: flex; flex-direction: column; height: 94px; margin-top: 2px; border-right: 1px solid #ddd; flex: none; }
.g-body { flex: 1; display: flex; padding-top: 2px; min-height: 0; }
.g-label { height: 23px; display: flex; align-items: center; justify-content: center; color: #444; }
.g-select { width: 232px; }
.g-draw { width: 194px; padding-left: 7px; }
.g-common { width: 277px; padding-left: 8px; }
.g-modify { width: 236px; padding-left: 8px; }
.g-sketch { width: 67px; }
.g-edit { width: 125px; padding-left: 7px; border-right: 1px solid #eee; }
.col { display: flex; flex-direction: column; flex: none; }
.rit { height: 23px; display: flex; align-items: center; white-space: nowrap; }
.rit .ic { margin-right: 3px; }
.ic { width: 16px; height: 16px; flex: none; }
.off { color: #bbb; }
.car { display: inline-block; width: 0; height: 0; margin-left: 6px; border: 3px solid transparent; border-top: 4px solid #777; border-bottom: 0; }
.bigbtn { width: 52px; display: flex; flex-direction: column; align-items: center; padding-left: 4px; }
.bigbtn span { margin-top: 7px; }
.ic-pointer { width: 24px; height: 28px; margin-top: 3px; }
.c1a { width: 99px; }
.c2a { width: 79px; }
.c3a { width: 67px; }
.c3b { width: 111px; }
.c4a { width: 53px; }
.c4b { width: 54px; }
.c4c { width: 62px; }
.sk { flex-wrap: wrap; gap: 7px 16px; padding: 4px 0 0 9px; align-content: flex-start; }
.sk .car { margin: 6px 0 0 -12px; }
.genbtn { width: 80px; height: 67px; margin-top: 1px; background: #bfd7f0; border-radius: 3px; display: flex; flex-direction: column; align-items: center; white-space: nowrap; }
.ic-rebar { width: 32px; height: 32px; }
.genbtn span { margin-top: 5px; }

.selbar { height: 27px; flex: none; background: #efefef; border-top: 1px solid #ddd; display: flex; gap: 4px; padding: 2px 0 0 3px; }
.sel { width: 98px; height: 22px; background: #fff; border-radius: 3px; padding-left: 3px; line-height: 21px; position: relative; }
.sel::after { content: ""; position: absolute; right: 5px; top: 9px; border: 3px solid transparent; border-top: 4px solid #666; border-bottom: 0; }

.main { flex: none; height: 663px; display: flex; background: #f4f4f4; }
.nav { width: 157px; flex: none; background: #fff; border-right: 1px solid #ccc; border-bottom: 1px solid #ccc; margin-right: 4px; position: relative; overflow: hidden; }
.grip { height: 12px; background: #e9e9e9; position: relative; flex: none; }
.x { position: absolute; right: 3px; top: 0; font-size: 9px; line-height: 12px; color: #999; }
.nav-h { height: 22px; background: #f0f0f0; border-top: 1px solid #ddd; border-bottom: 1px solid #ddd; line-height: 20px; padding-left: 9px; color: #777; }
.nav-tools { height: 27px; border-bottom: 1px solid #ddd; display: flex; align-items: center; gap: 4px; padding-left: 8px; }
.nt-spark { width: 12px; height: 12px; margin-right: 6px; }
.nt-on { width: 24px; height: 22px; background: #c5dcf5; border-radius: 3px; display: flex; align-items: center; justify-content: center; }
.nt { width: 16px; height: 14px; }
.nav-list { margin-top: 5px; width: 142px; }
.sec { height: 25px; margin: 0 0 3px 1px; background: #ededed; line-height: 24px; padding-left: 3px; }
.lock { width: 9px; height: 11px; }
.items { margin: -2px 0 2px; }
.item { height: 28px; display: flex; align-items: center; padding-left: 18px; white-space: nowrap; position: relative; font-size: 12px; }
.ni { width: 18px; height: 18px; margin-right: 14px; flex: none; }
.item-sel { margin-left: 1px; padding-left: 17px; background: #cfe5fd; background-clip: padding-box; border-top: 2px solid transparent; border-bottom: 1px solid transparent; }
.redbox { position: absolute; left: 5px; top: -5px; width: 130px; height: 34px; border: 3px solid #e53030; }
.dot { position: absolute; left: 40px; top: 3px; width: 6px; height: 6px; border-radius: 50%; background: #f00; }
.nav-scroll { position: absolute; left: 145px; top: 78px; width: 8px; height: 266px; background: #c4c4c4; border-radius: 4px; }

.mid { width: 324px; flex: none; display: flex; flex-direction: column; gap: 4px; }
.panel { background: #fff; border-left: 1px solid #ccc; border-bottom: 1px solid #ccc; display: flex; flex-direction: column; overflow: hidden; position: relative; }
.p-top { height: 300px; flex: none; }
.p-bot { flex: 1; }
.ptabs { height: 22px; display: flex; background: #f2f2f2; border-bottom: 1px solid #ccc; flex: none; border-top: 1px solid #ddd; }
.ptab { width: 65px; text-align: center; line-height: 21px; background: #e2e2e2; color: #777; border-right: 1px solid #bbb; }
.ptab.on { background: #f4f4f4; color: #222; font-weight: 700; border-right: 1px solid #ccc; }
.ptools { height: 28px; border-bottom: 1px solid #e2e2e2; display: flex; align-items: center; padding-left: 3px; flex: none; position: relative; }
.pt { display: flex; align-items: center; margin-right: 12px; white-space: nowrap; }
.pt .ic { margin-right: 4px; }
.more { position: absolute; left: 308px; top: 4px; font-size: 13px; color: #555; }
.psearch { height: 19px; border-bottom: 1px solid #ddd; color: #aaa; padding-left: 2px; line-height: 18px; position: relative; flex: none; }
.ps-i { position: absolute; left: 300px; top: 4px; width: 12px; height: 12px; }
.pbody { flex: 1; padding: 5px 0 0 20px; }
.chip { display: inline-block; width: 55px; height: 21px; background: #c5dcf5; border-radius: 3px; line-height: 20px; text-align: center; }
.attr-head, .attr-row { height: 21px; display: flex; border-bottom: 1px solid #ddd; flex: none; }
.ah0 { width: 22px; background: #f0f0f0; border-right: 1px solid #ddd; text-align: center; line-height: 21px; }
.ah1 { width: 100px; border-right: 1px solid #ddd; text-align: center; line-height: 21px; }
.ah2 { flex: 1; text-align: center; line-height: 21px; padding-right: 48px; }
.attr-head .ah0 { background: #fff; }
.attr-rest { flex: 1; background: #f0f0f0; width: 22px; }

.cad { flex: 1; background: #000; }
.cad-svg { display: block; width: 658px; height: 663px; }
.g-line path, .g-line polygon { stroke: #0a7a0a; stroke-width: 1; fill: none; }
.cad-t text { fill: #fff; font: 17px "Liberation Sans", sans-serif; text-anchor: middle; }
.cad-t .ax { font-size: 17px; }
.s-olive { fill: #7c7a14; }
.s-yel { fill: #e8e020; }
.s-red { fill: #e81010; }
.s-dred { fill: #7a0808; }
.s-grey { fill: #2b2b2b; }

.status { flex: 1; background: #f3f3f3; position: relative; display: flex; overflow: hidden; padding: 7px 0 0 3px; white-space: nowrap; line-height: 16px; }
.s1 { width: 82px; }
.s2 { width: 133px; }
.s3 { width: 103px; }

.dialog { position: absolute; left: 394px; top: 225px; width: 725px; height: 620px; background: linear-gradient(90deg, #f1f1f1 0, #f0f0f0 70px, #e3e3e3 110px); box-shadow: 0 0 12px rgba(0, 0, 0, .3); border-top: 1px solid #ccc; padding: 0 11px; }
.d-title { height: 40px; display: flex; justify-content: space-between; align-items: center; font-size: 13px; color: #444; padding-bottom: 2px; }
.d-x { width: 12px; height: 12px; margin-right: 2px; }
.d-x path { stroke: #777; stroke-width: 1; fill: none; }
.d-row { display: flex; gap: 6px; }
.d-lab { height: 21px; line-height: 16px; color: #555; }
.lab-l { height: 24px; }
.lab-r { height: 23px; }
.d-left { width: 213px; flex: none; }
.d-right { width: 483px; flex: none; margin-top: -1px; }
.tbl-wrap { height: 305px; background: #fff; border: 1px solid #c4c4c4; }
.tbl { width: 100%; border-collapse: collapse; table-layout: fixed; }
.tbl th { height: 19px; padding: 0; font-weight: 400; background: #f0f0f0; border: 1px solid #ddd; border-top: 0; width: 131px; color: #444; }
.tbl .th2 { width: 80px; background: #85baf8; color: #fff; }
.tbl td { height: 21px; padding: 0 0 0 3px; border-bottom: 1px solid #ddd; border-right: 1px solid #ddd; white-space: nowrap; overflow: hidden; background: #fff; }
.tbl td:first-child { background: #fffde8; border-left: 1px solid #ddd; }
.tbl td.cur { box-shadow: inset 0 0 0 2px #808080; }
.nodes { height: 308px; background: #fff; border: 1px solid #c8c8c8; display: flex; }
.node-grid { width: 459px; display: grid; grid-template-columns: repeat(3, 153px); grid-template-rows: repeat(2, 153px); flex: none; }
.cell { padding: 6px; border-right: 1px solid #ddd; border-bottom: 1px solid #ddd; }
.cell:nth-child(n+4) { border-bottom: 0; }
.cell-on { box-shadow: inset 0 0 0 2px #1890ff, inset 0 0 0 6px #8cbcf2; background: #fff; }
.tile { display: block; width: 140px; height: 140px; background: #008080; }
.tile .w { fill: none; stroke: #fff; stroke-width: 2.500; }
.tile .c { fill: none; stroke: #0ff; stroke-width: 6; }
.tile .cf { fill: #0ff; }
.tile text { text-anchor: middle; }
.tile .t { fill: #fff; font: 31px "Liberation Mono", monospace; }
.tile .tr { fill: #f00; font: 700 31px "Liberation Mono", monospace; }
.tile .ts { fill: #fff; font: 26px "Noto Sans CJK SC", sans-serif; }
.tile .big { fill: #fff; font: 300 46px "Liberation Mono", "Noto Sans CJK SC", monospace; }
.tile .bigz { fill: #fff; font: 300 46px "Noto Sans CJK SC", sans-serif; letter-spacing: 5px; }
.node-scroll { flex: 1; position: relative; }
.node-scroll span { position: absolute; left: 11px; top: 14px; width: 8px; height: 185px; background: #c8c8c8; border-radius: 4px; }
.d-cur { margin-top: 17px; height: 26px; }
.preview { display: block; width: 702px; height: 195px; background: #000; }
.pw { fill: none; stroke: #fff; stroke-width: 1; }
.pc { fill: none; stroke: #0ff; stroke-width: 2.500; }
.preview text { text-anchor: middle; }
.pg { fill: #0d0; font: 14.500px "Liberation Mono", monospace; }
.pr { fill: #e00; font: 15px "Liberation Mono", monospace; }
.pz1 { fill: #fff; font: 300 26px "Noto Sans CJK SC", sans-serif; }
.pz2 { fill: #fff; font: 300 24px "Liberation Mono", "Noto Sans CJK SC", monospace; }

.arrows { position: absolute; left: 0; top: 0; width: 1143px; height: 834px; pointer-events: none; }
.arrows polygon { fill: #f04040; }
```
